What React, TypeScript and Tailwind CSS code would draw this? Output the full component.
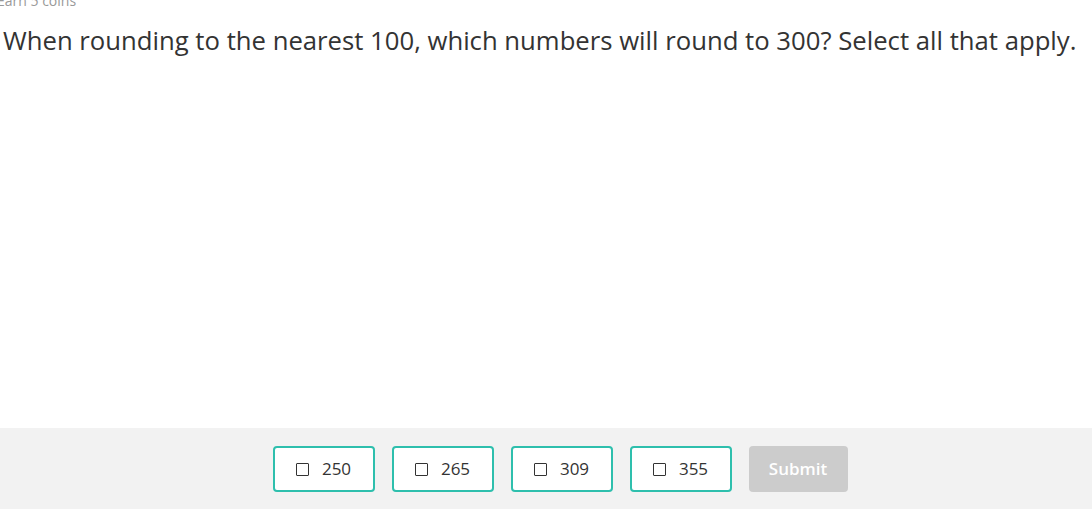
import React from 'react';

const choices = ['250', '265', '309', '355'];

export default function App(): React.ReactElement {
    return (
        <div className="w-[1092px] h-[509px] overflow-hidden bg-white flex flex-col font-['Open_Sans',sans-serif]">
            <div className="h-[428px] flex flex-col">
                <p className="text-[14px] leading-[20px] text-[#999] -mt-[9px] -ml-[3px]">Earn 5 coins</p>
                <h1 className="text-[25.7px] leading-[36px] text-[#333] mt-[12px] ml-[3px] whitespace-nowrap">
                    When rounding to the nearest 100, which numbers will round to 300? Select all that apply.
                </h1>
            </div>
            <div className="flex-1 bg-[#f2f2f2] flex items-start justify-center gap-[17px] pt-[18px] pl-[28px]">
                {choices.map((c) => (
                    <button
                        key={c}
                        className="w-[102px] h-[46px] bg-white border-2 border-[#2ebfad] rounded-[4px] flex items-center justify-center gap-[13px] text-[17px] text-[#333]"
                    >
                        <span className="w-[13px] h-[13px] border-[1.5px] border-[#333] rounded-[1px]" />
                        <span>{c}</span>
                    </button>
                ))}
                <button className="w-[99px] h-[46px] bg-[#cccccc] rounded-[4px] text-white text-[17px] font-semibold">Submit</button>
            </div>
        </div>
    );
}
